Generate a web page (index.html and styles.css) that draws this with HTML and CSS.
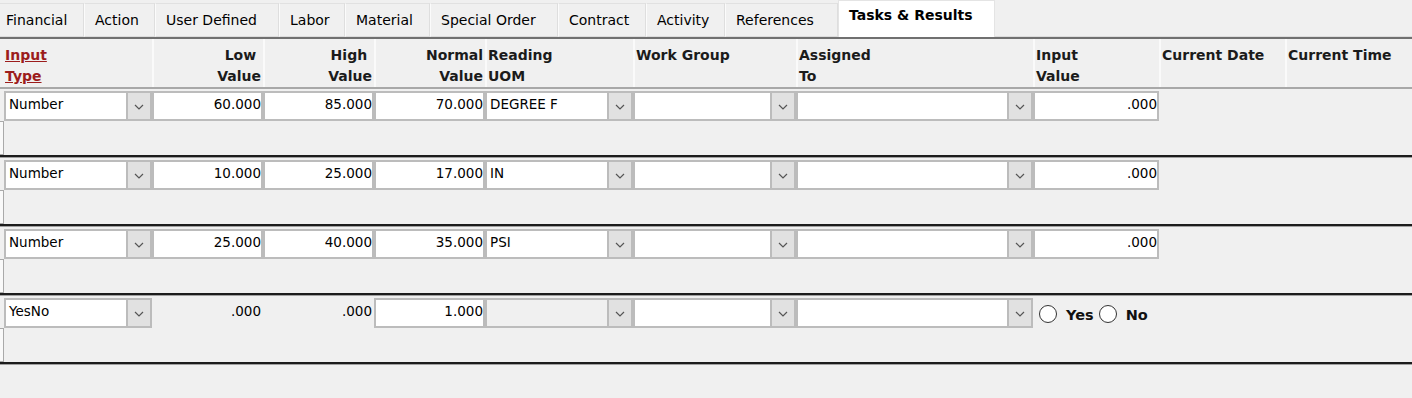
FILE: index.html
```html
<!DOCTYPE html>
<html>
<head>
<meta charset="utf-8">
<link rel="stylesheet" href="styles.css">
</head>
<body>
<div class="tabs">
  <div class="tab first">Financial</div>
  <div class="tab">Action</div>
  <div class="tab">User Defined</div>
  <div class="tab">Labor</div>
  <div class="tab">Material</div>
  <div class="tab">Special Order</div>
  <div class="tab">Contract</div>
  <div class="tab">Activity</div>
  <div class="tab">References</div>
  <div class="tab active">Tasks &amp; Results</div>
  <div class="tab-fill"></div>
</div>

<div class="head">
  <div class="hc first"><span class="link">Input<br>Type</span></div>
  <div class="hc r">Low&nbsp;<br>Value</div>
  <div class="hc r">High&nbsp;<br>Value</div>
  <div class="hc r">Normal<br>Value</div>
  <div class="hc">Reading<br>UOM</div>
  <div class="hc">Work Group</div>
  <div class="hc">Assigned<br>To</div>
  <div class="hc">Input<br>Value</div>
  <div class="hc">Current Date</div>
  <div class="hc">Current Time</div>
</div>

<div class="row">
  <div class="c1"><div class="sel"><div class="v">Number</div><div class="btn"><svg width="10" height="6" viewBox="0 0 10 6"><path d="M1 1l4 4 4-4" fill="none" stroke="#555" stroke-width="1.2"/></svg></div></div></div>
  <div class="inp">60.000</div>
  <div class="inp">85.000</div>
  <div class="inp">70.000</div>
  <div class="sel"><div class="v">DEGREE F</div><div class="btn"><svg width="10" height="6" viewBox="0 0 10 6"><path d="M1 1l4 4 4-4" fill="none" stroke="#555" stroke-width="1.2"/></svg></div></div>
  <div class="sel"><div class="v"></div><div class="btn"><svg width="10" height="6" viewBox="0 0 10 6"><path d="M1 1l4 4 4-4" fill="none" stroke="#555" stroke-width="1.2"/></svg></div></div>
  <div class="sel"><div class="v"></div><div class="btn"><svg width="10" height="6" viewBox="0 0 10 6"><path d="M1 1l4 4 4-4" fill="none" stroke="#555" stroke-width="1.2"/></svg></div></div>
  <div class="inp">.000</div>
  <div class="edge"></div>
</div>

<div class="row">
  <div class="c1"><div class="sel"><div class="v">Number</div><div class="btn"><svg width="10" height="6" viewBox="0 0 10 6"><path d="M1 1l4 4 4-4" fill="none" stroke="#555" stroke-width="1.2"/></svg></div></div></div>
  <div class="inp">10.000</div>
  <div class="inp">25.000</div>
  <div class="inp">17.000</div>
  <div class="sel"><div class="v">IN</div><div class="btn"><svg width="10" height="6" viewBox="0 0 10 6"><path d="M1 1l4 4 4-4" fill="none" stroke="#555" stroke-width="1.2"/></svg></div></div>
  <div class="sel"><div class="v"></div><div class="btn"><svg width="10" height="6" viewBox="0 0 10 6"><path d="M1 1l4 4 4-4" fill="none" stroke="#555" stroke-width="1.2"/></svg></div></div>
  <div class="sel"><div class="v"></div><div class="btn"><svg width="10" height="6" viewBox="0 0 10 6"><path d="M1 1l4 4 4-4" fill="none" stroke="#555" stroke-width="1.2"/></svg></div></div>
  <div class="inp">.000</div>
  <div class="edge"></div>
</div>

<div class="row">
  <div class="c1"><div class="sel"><div class="v">Number</div><div class="btn"><svg width="10" height="6" viewBox="0 0 10 6"><path d="M1 1l4 4 4-4" fill="none" stroke="#555" stroke-width="1.2"/></svg></div></div></div>
  <div class="inp">25.000</div>
  <div class="inp">40.000</div>
  <div class="inp">35.000</div>
  <div class="sel"><div class="v">PSI</div><div class="btn"><svg width="10" height="6" viewBox="0 0 10 6"><path d="M1 1l4 4 4-4" fill="none" stroke="#555" stroke-width="1.2"/></svg></div></div>
  <div class="sel"><div class="v"></div><div class="btn"><svg width="10" height="6" viewBox="0 0 10 6"><path d="M1 1l4 4 4-4" fill="none" stroke="#555" stroke-width="1.2"/></svg></div></div>
  <div class="sel"><div class="v"></div><div class="btn"><svg width="10" height="6" viewBox="0 0 10 6"><path d="M1 1l4 4 4-4" fill="none" stroke="#555" stroke-width="1.2"/></svg></div></div>
  <div class="inp">.000</div>
  <div class="edge"></div>
</div>

<div class="row">
  <div class="c1"><div class="sel"><div class="v">YesNo</div><div class="btn"><svg width="10" height="6" viewBox="0 0 10 6"><path d="M1 1l4 4 4-4" fill="none" stroke="#555" stroke-width="1.2"/></svg></div></div></div>
  <div class="plain">.000</div>
  <div class="plain">.000</div>
  <div class="inp">1.000</div>
  <div class="sel dis"><div class="v"></div><div class="btn"><svg width="10" height="6" viewBox="0 0 10 6"><path d="M1 1l4 4 4-4" fill="none" stroke="#555" stroke-width="1.2"/></svg></div></div>
  <div class="sel"><div class="v"></div><div class="btn"><svg width="10" height="6" viewBox="0 0 10 6"><path d="M1 1l4 4 4-4" fill="none" stroke="#555" stroke-width="1.2"/></svg></div></div>
  <div class="sel"><div class="v"></div><div class="btn"><svg width="10" height="6" viewBox="0 0 10 6"><path d="M1 1l4 4 4-4" fill="none" stroke="#555" stroke-width="1.2"/></svg></div></div>
  <div class="radios">
    <span class="radio"></span><span class="rl">Yes</span>
    <span class="radio"></span><span class="rl">No</span>
  </div>
  <div class="edge"></div>
</div>
</body>
</html>
```

FILE: styles.css
```css
* { box-sizing: border-box; }

body {
  margin: 0;
  width: 1412px;
  height: 398px;
  overflow: hidden;
  background: #f0f0f0;
  font-family: "DejaVu Sans", sans-serif;
  color: #000;
}

/* ---------- tabs ---------- */
.tabs {
  display: grid;
  grid-template-columns: 84px 71px 124px 66px 85px 128px 88px 79px 113px 157px 1fr;
  height: 37px;
}

.tab {
  margin-top: 3px;
  height: 34px;
  padding: 7px 0 0 10px;
  font-size: 14px;
  line-height: 18px;
  white-space: nowrap;
  background: #f0f0f0;
  border-top: 1px solid #e1e1e1;
  border-left: 1px solid #fbfbfb;
  border-right: 1px solid #dedede;
  border-bottom: 1px solid #dcdcdc;
}

.tab.first { padding-left: 6px; border-left: none; }

.tab.active {
  margin-top: 0;
  height: 37px;
  padding-top: 5px;
  background: #fff;
  font-weight: bold;
  border: 1px solid #e4e4e4;
  border-bottom: none;
}

.tab-fill { border-bottom: 1px solid #dcdcdc; }

/* ---------- header ---------- */
.head {
  display: grid;
  grid-template-columns: 152px 111px 111px 111px 148px 163px 237px 126px 126px 1fr;
  height: 52px;
  border-top: 2px solid #707070;
  border-bottom: 2px solid #a8a8a8;
}

.hc {
  padding: 6px 0 0 1px;
  font-size: 14px;
  font-weight: bold;
  line-height: 21px;
  color: #1b1b1b;
  white-space: nowrap;
  border-left: 2px solid #fafafa;
}

.hc.first { border-left: none; padding-left: 5px; }
.hc.r { text-align: right; padding-right: 2px; }

.link {
  color: #9c1c1c;
  text-decoration: underline;
}

/* ---------- rows ---------- */
.row {
  display: grid;
  grid-template-columns: 152px 111px 111px 111px 148px 163px 237px 126px 126px 1fr;
  grid-template-rows: 30px 34px;
  padding-top: 2px;
  border-bottom: 2px solid #1c1c1c;
  box-shadow: 0 1px 0 #a0a0a0;
  margin-bottom: 1px;
}

.c1 { padding-left: 4px; }

.sel {
  display: flex;
  height: 30px;
  border: 2px solid #bcbcbc;
  background: #fff;
}

.sel.dis { background: #f0f0f0; }

.sel .v {
  flex: 1;
  padding: 3px 0 0 3px;
  font-size: 13.5px;
  line-height: 16px;
  white-space: nowrap;
}

.sel .btn {
  width: 24px;
  background: #e1e1e1;
  border-left: 2px solid #bcbcbc;
  display: flex;
  align-items: center;
  justify-content: center;
  padding-top: 1px;
}

.inp {
  height: 30px;
  border: 2px solid #bcbcbc;
  background: #fff;
  text-align: right;
  padding: 3px 0 0 0;
  font-size: 13.5px;
  line-height: 16px;
}

.plain {
  text-align: right;
  padding: 5px 2px 0 0;
  font-size: 13.5px;
  line-height: 16px;
}

.edge {
  grid-column: 1;
  grid-row: 2;
  width: 4px;
  border: 1px solid #a9a9a9;
  border-left: none;
  background: #f9f9f9;
}

.radios {
  grid-column: 8 / span 2;
  grid-row: 1;
  display: flex;
  align-items: center;
  padding: 1px 0 0 6px;
}

.radio {
  width: 18px;
  height: 18px;
  border: 1.5px solid #333;
  border-radius: 50%;
  background: #fff;
  margin-right: 9px;
}

.rl {
  font-size: 14.5px;
  font-weight: bold;
  line-height: 16px;
  color: #111;
  margin-right: 5px;
  padding-top: 2px;
}
```
